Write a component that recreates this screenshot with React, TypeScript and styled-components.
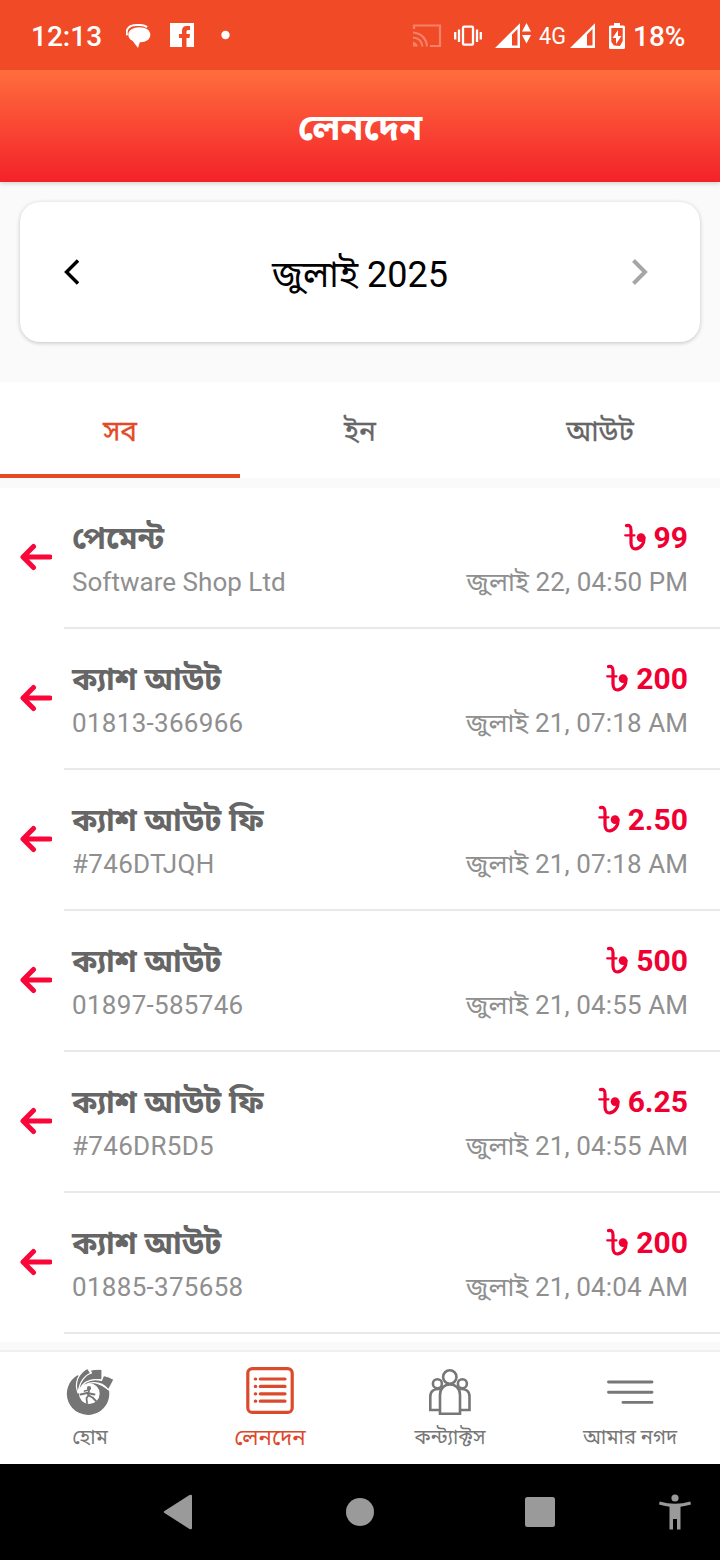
import React from 'react';
import styled, { createGlobalStyle } from 'styled-components';

const Global = createGlobalStyle`
  * { box-sizing: border-box; }
  body { margin: 0; background: #fff; font-family: Roboto, "Noto Sans Bengali", "Noto Sans", sans-serif; }
  svg { display: block; flex: none; }
`;

const Screen = styled.div`
  width: 720px;
  height: 1560px;
  display: flex;
  flex-direction: column;
  background: #fafafa;
  overflow: hidden;
`;

const StatusBar = styled.header`
  height: 70px;
  flex: none;
  z-index: 2;
  background: #f04b26;
  color: #fff;
  display: flex;
  align-items: center;
  padding: 2px 35px 0 31px;
`;

const StatusText = styled.span<{ $size: number; $weight: number; $width: number; $gap?: number }>`
  font-size: ${(p) => p.$size}px;
  font-weight: ${(p) => p.$weight};
  width: ${(p) => p.$width}px;
  margin-left: ${(p) => p.$gap ?? 0}px;
  padding-top: 2px;
  line-height: 34px;
  white-space: nowrap;
`;

const NetworkLabel = styled.span`
  width: 26px;
  margin-left: 8px;
  font-size: 24px;
  line-height: 34px;
  transform: scaleX(0.9);
  transform-origin: left center;
`;

const StatusIcon = styled.div<{ $gap: number }>`
  margin-left: ${(p) => p.$gap}px;
`;

const StatusGroup = styled.div`
  display: flex;
  align-items: center;
  margin-left: auto;
`;

const TitleBar = styled.div`
  height: 112px;
  flex: none;
  display: flex;
  justify-content: center;
  align-items: center;
  background: linear-gradient(#ff6d3d, #f3222a);
  box-shadow: 0 1px 5px rgba(0, 0, 0, 0.2);
  z-index: 1;
`;

const Title = styled.h1`
  margin: 0;
  padding-top: 4px;
  font-size: 37px;
  line-height: 44px;
  font-weight: 700;
  color: #fff;
`;

const MonthCard = styled.section`
  height: 140px;
  flex: none;
  margin: 20px 20px 40px;
  padding: 0 52px 0 43px;
  display: flex;
  align-items: center;
  justify-content: space-between;
  background: #fff;
  border-radius: 20px;
  box-shadow: 0 1px 4px rgba(0, 0, 0, 0.22);
`;

const MonthLabel = styled.span`
  font-size: 36px;
  line-height: 44px;
  padding: 5px 0 0 9px;
  color: #000;
`;

const Tabs = styled.nav`
  display: flex;
  height: 96px;
  flex: none;
  background: #fff;
  margin-bottom: 10px;
`;

const Tab = styled.div<{ $active?: boolean }>`
  flex: 1;
  display: flex;
  align-items: center;
  justify-content: center;
  padding-top: 10px;
  font-size: 28px;
  -webkit-text-stroke: 0.3px currentColor;
  color: ${(p) => (p.$active ? '#e24a28' : '#666')};
  border-bottom: 4px solid ${(p) => (p.$active ? '#e64a25' : 'transparent')};
`;

const List = styled.main`
  height: 854px;
  flex: none;
  background: #fff;
`;

const Row = styled.article`
  height: 141px;
  display: flex;
`;

const ArrowCell = styled.div`
  width: 64px;
  padding: 55px 0 0 20px;
`;

const RowBody = styled.div`
  flex: 1;
  padding: 28px 32px 0 8px;
  border-bottom: 2px solid #e9e9e9;
`;

const Line = styled.div`
  height: 44px;
  display: flex;
  align-items: center;
  justify-content: space-between;
  white-space: nowrap;
`;

const Kind = styled.span`
  padding-top: 2px;
  font-size: 31px;
  line-height: 44px;
  font-weight: 700;
  color: #666;
`;

const Amount = styled.span`
  display: flex;
  align-items: center;
  gap: 8px;
  padding-bottom: 2px;
  font-size: 30px;
  font-weight: 700;
  color: #f00032;
`;

const Detail = styled.span<{ $spacing: number }>`
  font-size: 26px;
  letter-spacing: ${(p) => p.$spacing}px;
  color: #8f8f8f;
`;

const EntryDate = styled(Detail)`
  padding-top: 4px;
  margin-right: -${(p) => p.$spacing}px;
`;

const BottomNav = styled.nav`
  display: flex;
  height: 114px;
  flex: none;
  margin-top: 8px;
  border-top: 2px solid #f0f0f0;
  background: #fff;
`;

const NavItem = styled.div<{ $active?: boolean }>`
  flex: 1;
  display: flex;
  flex-direction: column;
  align-items: center;
  padding-top: 15px;
  color: ${(p) => (p.$active ? '#dc4a2c' : '#777')};
  font-size: ${(p) => (p.$active ? 22.3 : 20.1)}px;
`;

const NavLabel = styled.span`
  height: 30px;
  margin-top: 7px;
  line-height: 30px;
  white-space: nowrap;
`;

const SystemBar = styled.footer`
  height: 96px;
  flex: none;
  display: flex;
  align-items: center;
  padding: 0 29px 0 163px;
  background: #000;
  color: #9a9a9a;
`;

const SystemIcon = styled.div<{ $gap: number }>`
  margin-left: ${(p) => p.$gap}px;
`;

const ArrowLeft = () => (
  <svg width="32" height="28" viewBox="0 0 32 28" fill="none" stroke="#fa0638" strokeWidth="5" strokeLinecap="round">
    <path d="M30 14H4M13.500 3.500L3 14L13.500 24.500" strokeLinejoin="round" />
  </svg>
);

const Taka = () => (
  <svg width="22" height="28" viewBox="0 0 22 28" fill="none" stroke="#f00032" strokeLinecap="round">
    <path d="M2.500 2.600C5.800 1.600 7 3.800 7 7V20C7 24.500 9.200 26.200 12 25.800C17 25.200 20.500 20 20 14.500" strokeWidth="3.200" />
    <path d="M1.200 12.300H10.500" strokeWidth="2.200" />
    <circle cx="17" cy="14.600" r="4.300" fill="#f00032" stroke="none" />
  </svg>
);

const HomeIcon = () => (
  <svg width="48" height="48" viewBox="0 0 48 48">
    <path
      fill="#757575"
      fillRule="evenodd"
      d="M11.500 8.300A21.200 21.200 0 1 0 43 23.500L36 19L22 13ZM23.300 16.200A10.400 10.400 0 1 1 23.200 37A10.400 10.400 0 0 1 23.300 16.200Z"
    />
    <g fill="#757575" stroke="#fff" strokeWidth="1.200" strokeLinejoin="round">
      <path d="M12 26C8 16 12 6.500 21.500 1.200L25.500 7.500C18.500 11 13.500 17 12 26Z" />
      <path d="M12.500 25.500C13 15 19 8 25.500 6L24 3.200Q30 1.800 36 2.300V13C26 11 16 16 12.500 25.500Z" />
      <path d="M13 23C18 14 26 11 35.500 13.500L37.500 8.500Q43 9.500 48 12.500L42.500 22.800C35 13.500 21 13 13 23Z" />
    </g>
    <g fill="none" stroke="#757575" strokeWidth="1.800" strokeLinecap="round" strokeLinejoin="round">
      <path d="M22.500 23L18.500 24M23 23.500L22 28L26.500 30.500L30 34M22.500 28.500L20.500 31L21 36M14.500 27.500L21 26L28.500 27.500" />
      <circle cx="23" cy="21.200" r="1.200" fill="#757575" />
    </g>
  </svg>
);

const ListIcon = () => (
  <svg width="48" height="48" viewBox="0 0 48 48" fill="none" stroke="#dc4a2c" strokeLinecap="round">
    <rect x="1.800" y="1.600" width="44.400" height="43.800" rx="4.500" strokeWidth="3.200" />
    <path strokeWidth="3.200" d="M9.300 12h.4M14.300 12H39M9.300 19.400h.4M14.300 19.400H39M9.300 26.800h.4M14.300 26.800H39M9.300 34.200h.4M14.300 34.200H39" />
  </svg>
);

const PeopleIcon = () => (
  <svg width="48" height="48" viewBox="0 0 48 48" fill="none" stroke="#777" strokeWidth="2.600">
    <circle cx="23.800" cy="10" r="6.700" />
    <circle cx="11.400" cy="16.700" r="4.500" />
    <circle cx="36.400" cy="16.700" r="4.500" />
    <path d="M14 46.700V28C14 13.800 34 13.800 34 28V46.700Z" />
    <path d="M14 43H4.300V29.500C4.300 24 8 21.500 14.500 22M34 43H43.500V29.500C43.500 24 40 21.500 33.500 22" />
  </svg>
);

const MenuIcon = () => (
  <svg width="48" height="48" viewBox="0 0 48 48" fill="none" stroke="#777" strokeWidth="2.900" strokeLinecap="round">
    <path d="M2.500 15H46M2.500 25.300H46M17 35.400H46" />
  </svg>
);

const MessageIcon = () => (
  <svg width="25" height="28" viewBox="0 0 25 28" fill="#fff">
    <path d="M13.500 5.300C20 5.300 24.300 8.200 24.300 12.800C24.300 17.400 20 20.300 14.500 20.300H13.800L12 26L6.500 18.800C3.800 17.500 2.300 15.400 2.300 12.800C2.300 8.200 7 5.300 13.500 5.300Z" />
    <path d="M1.200 13.300C-1 6.500 4 3 10.500 3H14C17 3 19.500 3.600 21 5.200" fill="none" stroke="#fff" strokeWidth="2" />
  </svg>
);

const FacebookIcon = () => (
  <svg width="24" height="28" viewBox="0 0 24 28" fill="#fff">
    <path d="M0 1H24V25H16.500V16H19.500L20 12H16.500V9.500Q16.500 8 18 8H20V4H16.500Q12 4 12 9V12H9V16H12V25H0Z" />
  </svg>
);

const DotIcon = () => (
  <svg width="9" height="28" viewBox="0 0 9 28" fill="#fff">
    <circle cx="4.500" cy="13" r="4.200" />
  </svg>
);

const CastIcon = () => (
  <svg width="30" height="26" viewBox="0 0 30 26" fill="none" stroke="#fff" strokeWidth="2.200" opacity=".3">
    <path d="M2 6V2.500H28V23H18M1 9.500C9.500 10 14.500 16 15 23.500M1 14.500C6.500 15 10 18.500 10.500 23.500" />
    <path d="M1 18.500C3.500 19 5.500 21 6 23.500H1Z" fill="#fff" stroke="none" />
  </svg>
);

const VibrateIcon = () => (
  <svg width="28" height="22" viewBox="0 0 28 22" fill="none" stroke="#fff" strokeWidth="2.300">
    <rect x="9" y="1.700" width="10" height="18" rx="1" />
    <path d="M1.200 7V14.500M5 4.500V17M23 4.500V17M26.800 7V14.500" />
  </svg>
);

const SignalIcon = ({ data }: { data?: boolean }) => (
  <svg width={data ? 36 : 25} height="26" viewBox={data ? '0 0 36 26' : '0 0 25 26'} fill="#fff">
    <path fillRule="evenodd" d="M0 25L25 0.200V25ZM17 11.500V22.500H22.500V6Z" />
    {data && <path d="M27 8.500L31.500 0L36 8.500ZM27 12L31.500 20.500L36 12Z" />}
  </svg>
);

const BatteryIcon = () => (
  <svg width="16" height="26" viewBox="0 0 16 26" fill="#fff">
    <path fillRule="evenodd" d="M5 0H11V2.500H14.500Q16 2.500 16 4V24.500Q16 26 14.500 26H1.500Q0 26 0 24.500V4Q0 2.500 1.500 2.500H5ZM2.300 5V19L5 22.500L11 23L13.700 18V5Z" />
    <path d="M9 7L3.500 15H7V21L12.500 13H9Z" />
  </svg>
);

type Entry = { kind: string; detail: string; amount: string; date: string };

const entries: Entry[] = [
  { kind: 'পেমেন্ট', detail: 'Software Shop Ltd', amount: '99', date: 'জুলাই 22, 04:50 PM' },
  { kind: 'ক্যাশ আউট', detail: '01813-366966', amount: '200', date: 'জুলাই 21, 07:18 AM' },
  { kind: 'ক্যাশ আউট ফি', detail: '#746DTJQH', amount: '2.50', date: 'জুলাই 21, 07:18 AM' },
  { kind: 'ক্যাশ আউট', detail: '01897-585746', amount: '500', date: 'জুলাই 21, 04:55 AM' },
  { kind: 'ক্যাশ আউট ফি', detail: '#746DR5D5', amount: '6.25', date: 'জুলাই 21, 04:55 AM' },
  { kind: 'ক্যাশ আউট', detail: '01885-375658', amount: '200', date: 'জুলাই 21, 04:04 AM' },
];

const navItems = [
  { label: 'হোম', icon: <HomeIcon /> },
  { label: 'লেনদেন', icon: <ListIcon />, active: true },
  { label: 'কন্ট্যাক্টস', icon: <PeopleIcon /> },
  { label: 'আমার নগদ', icon: <MenuIcon /> },
];

export default function App() {
  return (
    <Screen>
      <Global />
      <StatusBar>
        <StatusText $size={28} $weight={500} $width={70}>12:13</StatusText>
        <StatusIcon $gap={25}><MessageIcon /></StatusIcon>
        <StatusIcon $gap={19}><FacebookIcon /></StatusIcon>
        <StatusIcon $gap={27}><DotIcon /></StatusIcon>
        <StatusGroup>
          <CastIcon />
          <StatusIcon $gap={12}><VibrateIcon /></StatusIcon>
          <StatusIcon $gap={13}><SignalIcon data /></StatusIcon>
          <NetworkLabel>4G</NetworkLabel>
          <StatusIcon $gap={5}><SignalIcon /></StatusIcon>
          <StatusIcon $gap={14}><BatteryIcon /></StatusIcon>
          <StatusText $size={28} $weight={500} $width={52} $gap={8}>18%</StatusText>
        </StatusGroup>
      </StatusBar>
      <TitleBar>
        <Title>লেনদেন</Title>
      </TitleBar>
      <MonthCard>
        <svg width="16" height="26" viewBox="0 0 16 26" fill="none" stroke="#000" strokeWidth="3.400">
          <path d="M15 1.500L3.500 13L15 24.500" />
        </svg>
        <MonthLabel>জুলাই 2025</MonthLabel>
        <svg width="16" height="26" viewBox="0 0 16 26" fill="none" stroke="#a6a6a6" strokeWidth="4">
          <path d="M1.500 1.500L13 13L1.500 24.500" />
        </svg>
      </MonthCard>
      <Tabs>
        <Tab $active>সব</Tab>
        <Tab>ইন</Tab>
        <Tab>আউট</Tab>
      </Tabs>
      <List>
        {entries.map((e, i) => (
          <Row key={i}>
            <ArrowCell><ArrowLeft /></ArrowCell>
            <RowBody>
              <Line>
                <Kind>{e.kind}</Kind>
                <Amount><Taka />{e.amount}</Amount>
              </Line>
              <Line>
                <Detail $spacing={/\d/.test(e.detail) ? 0.3 : 0.03}>{e.detail}</Detail>
                <EntryDate $spacing={0.12}>{e.date}</EntryDate>
              </Line>
            </RowBody>
          </Row>
        ))}
      </List>
      <BottomNav>
        {navItems.map((n) => (
          <NavItem key={n.label} $active={n.active}>
            {n.icon}
            <NavLabel>{n.label}</NavLabel>
          </NavItem>
        ))}
      </BottomNav>
      <SystemBar>
        <SystemIcon $gap={0}>
          <svg width="30" height="36" viewBox="0 0 30 36" fill="currentColor"><path d="M1.500 17L26.500 1Q29 0 29 2V34Q29 36 26.500 35L1.500 19Q0 18 1.500 17Z" /></svg>
        </SystemIcon>
        <SystemIcon $gap={153}>
          <svg width="28" height="28" viewBox="0 0 28 28" fill="currentColor"><circle cx="14" cy="14" r="14" /></svg>
        </SystemIcon>
        <SystemIcon $gap={151}>
          <svg width="30" height="30" viewBox="0 0 30 30" fill="currentColor"><rect width="30" height="30" rx="2.500" /></svg>
        </SystemIcon>
        <SystemIcon $gap={104}>
          <svg width="32" height="36" viewBox="0 0 32 36" fill="currentColor">
            <circle cx="16" cy="4" r="3.600" />
            <path d="M.7 7.500Q16 12 31.300 7.500L32 10.500Q27 12 21.500 12.700V35.500H18V25H14V35.500H10.500V12.700Q5 12 0 10.500Z" />
          </svg>
        </SystemIcon>
      </SystemBar>
    </Screen>
  );
}
